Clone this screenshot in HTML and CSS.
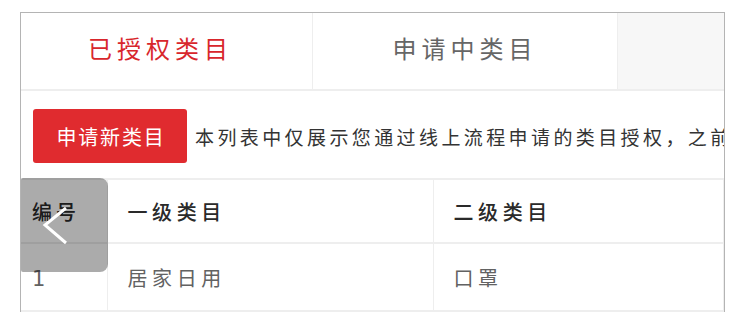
FILE: index.html
```html
<!DOCTYPE html>
<html lang="zh-CN">
<head>
<meta charset="utf-8">
<title>类目授权</title>
<link rel="stylesheet" href="styles.css">
</head>
<body>
<div class="page">
  <div class="panel">
    <div class="tabs">
      <div class="tab tab-active">已授权类目</div>
      <div class="tab">申请中类目</div>
      <div class="tab tab-empty"></div>
    </div>
    <div class="toolbar">
      <button class="btn-apply">申请新类目</button>
      <p class="notice">本列表中仅展示您通过线上流程申请的类目授权，之前</p>
    </div>
    <table class="grid">
      <colgroup>
        <col class="col-no">
        <col class="col-first">
        <col class="col-second">
      </colgroup>
      <thead>
        <tr>
          <th class="cell-no">编号</th>
          <th>一级类目</th>
          <th>二级类目</th>
        </tr>
      </thead>
      <tbody>
        <tr>
          <td class="cell-no num">1</td>
          <td>居家日用</td>
          <td>口罩</td>
        </tr>
      </tbody>
    </table>
    <div class="back-btn">
      <svg class="back-icon" width="87" height="94" viewBox="0 0 87 94">
        <polyline points="45,30 24,47 45,65" fill="none" stroke="#ffffff" stroke-width="3"/>
      </svg>
    </div>
  </div>
</div>
</body>
</html>
```

FILE: styles.css
```css
html, body {
  margin: 0;
  padding: 0;
  background: #ffffff;
  overflow: hidden;
}

body {
  font-family: "Noto Sans CJK SC", "Noto Sans", sans-serif;
  color: #333333;
}

.page {
  padding: 12px 0 0 20px;
}

.panel {
  position: relative;
  width: 703px;
  height: 330px;
  border: 1px solid #b4b4b4;
  overflow: hidden;
  background: #ffffff;
}

.tabs {
  display: flex;
  height: 76px;
  border-bottom: 2px solid #eeeeee;
}

.tab {
  display: flex;
  align-items: center;
  justify-content: center;
  font-size: 24px;
  letter-spacing: 5px;
  color: #666666;
  padding-bottom: 8px;
  box-sizing: border-box;
}

.tab:nth-child(1) {
  width: 292px;
  border-right: 1px solid #eeeeee;
  padding-right: 12px;
}

.tab:nth-child(2) {
  width: 305px;
  border-right: 1px solid #eeeeee;
}

.tab-active {
  color: #d8262c;
}

.tab-empty {
  flex: 1;
  background: #f7f7f7;
}

.toolbar {
  display: flex;
  align-items: center;
  gap: 8px;
  padding: 18px 0 15px 12px;
  white-space: nowrap;
}

.btn-apply {
  flex: none;
  width: 154px;
  height: 54px;
  border: none;
  border-radius: 3px;
  background: #e02b2f;
  color: #ffffff;
  font-family: inherit;
  font-size: 20px;
  letter-spacing: 1.8px;
  padding: 0 0 0 2px;
}

.notice {
  margin: 0;
  font-size: 19px;
  letter-spacing: 3.4px;
  color: #333333;
}

.grid {
  width: 703px;
  border-collapse: collapse;
  table-layout: fixed;
}

.col-no {
  width: 86px;
}

.col-first {
  width: 326px;
}

.grid th,
.grid td {
  border-top: 2px solid #eeeeee;
  border-right: 1px solid #eeeeee;
  text-align: left;
  padding: 0 0 0 20px;
  font-size: 20px;
  letter-spacing: 4.6px;
  white-space: nowrap;
}

.grid th {
  height: 62px;
  font-weight: 500;
  color: #2a2a2a;
}

.grid td {
  height: 62px;
  color: #626262;
  border-bottom: 2px solid #eeeeee;
}

.grid .cell-no {
  padding-left: 11px;
  letter-spacing: 4px;
}

.grid .num {
  font-family: "DejaVu Sans", sans-serif;
  font-size: 21px;
  padding-top: 4px;
}

.back-btn {
  position: absolute;
  left: 0;
  top: 165px;
  width: 87px;
  height: 94px;
  border-radius: 2px 8px 8px 2px;
  background: rgba(0, 0, 0, 0.33);
}

.back-icon {
  display: block;
}
```
